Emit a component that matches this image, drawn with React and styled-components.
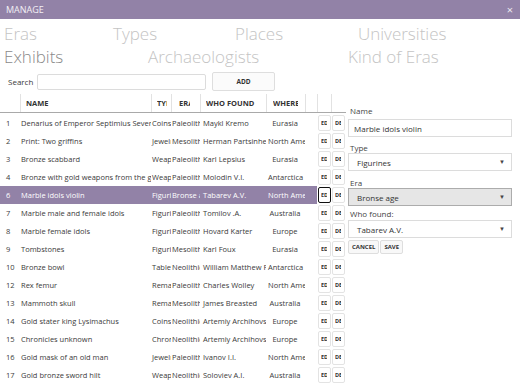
import React from 'react'
import styled, { createGlobalStyle, css } from 'styled-components'

const Colors = {
  PURPLE: '#9282a7',
  TEXT: '#3a3a3a',
  LIGHT_TAB: '#c4c4c4',
  ACTIVE_TAB: '#8a8a8a',
  BORDER: '#d9d9d9',
}

const GlobalStyle = createGlobalStyle`
  html, body {
    margin: 0;
    padding: 0;
    background: #ffffff;
  }
  body {
    width: 520px;
    height: 390px;
    overflow: hidden;
    font-family: 'Open Sans', 'Noto Sans', sans-serif;
    color: ${Colors.TEXT};
  }
`

const Window = styled.div`
  width: 520px;
  height: 390px;
  display: flex;
  flex-direction: column;
  overflow: hidden;
`

const TitleBar = styled.div`
  height: 19px;
  flex: none;
  background: ${Colors.PURPLE};
  display: flex;
  align-items: center;
  justify-content: space-between;
  padding: 0 7px 0 6px;
  color: #f2f0f5;
  font-size: 9px;
`

const Close = styled.span`
  font-size: 11px;
  line-height: 1;
  color: #ece9f0;
`

const Tabs = styled.div`
  padding: 3px 0 0 4px;
  flex: none;
`

const TabRow = styled.div`
  display: grid;
  grid-template-columns: ${p => p.$cols};
  height: 23px;
  align-items: center;
`

const Tab = styled.div`
  font-size: 17px;
  font-weight: 300;
  white-space: nowrap;
  color: ${p => (p.$active ? Colors.ACTIVE_TAB : Colors.LIGHT_TAB)};
`

const Body = styled.div`
  display: flex;
  flex: 1;
  min-height: 0;
`

const Left = styled.div`
  width: 346px;
  flex: none;
  padding-top: 4px;
`

const SearchRow = styled.div`
  display: flex;
  align-items: center;
  height: 19px;
  margin-bottom: 3px;
`

const SearchLabel = styled.span`
  font-size: 8px;
  width: 30px;
  padding-left: 8px;
`

const SearchInput = styled.div`
  width: 169px;
  height: 16px;
  border: 1px solid #dcdcdc;
  box-sizing: border-box;
  border-radius: 2px;
  margin-left: -1px;
`

const AddButton = styled.div`
  margin-left: 6px;
  width: 63px;
  height: 19px;
  box-sizing: border-box;
  border: 1px solid #dedede;
  border-radius: 2px;
  background: #fbfbfb;
  display: flex;
  align-items: center;
  justify-content: center;
  font-size: 6.5px;
  font-weight: 700;
  color: #333;
`

const COLUMNS = '20px 131px 20px 29px 66px 39px 12px 14px 14px'

const HeaderRow = styled.div`
  display: grid;
  grid-template-columns: ${COLUMNS};
  height: 18px;
  border-bottom: 1px solid #a9a9a9;
  margin-bottom: 1px;
`

const HeaderCell = styled.div`
  overflow: hidden;
  white-space: nowrap;
  line-height: 18px;
  font-size: 7.5px;
  font-weight: 700;
  color: #333;
  box-sizing: border-box;
  padding-left: ${p => p.$pad ?? 5}px;
  padding-right: ${p => p.$right ?? 3}px;
  border-left: ${p => (p.$first ? 'none' : '1px solid #e2e2e2')};
`

const HeaderText = styled.span`
  display: block;
  overflow: hidden;
`

const Row = styled.div`
  display: grid;
  grid-template-columns: ${COLUMNS};
  height: 18px;
  align-items: center;
  font-size: 7.5px;
  ${p =>
    p.$selected &&
    css`
      background: linear-gradient(to right, ${Colors.PURPLE} 317px, transparent 317px);
      color: #ffffff;
    `}
`

const Cell = styled.div`
  overflow: hidden;
  white-space: nowrap;
  box-sizing: border-box;
  padding-left: ${p => p.$pad ?? 2}px;
  padding-right: 3px;
  text-align: ${p => (p.$center ? 'center' : 'left')};
`

const Clip = styled.span`
  display: block;
  overflow: hidden;
  width: 100%;
`

const SmallButton = styled.div`
  width: 13px;
  height: 16px;
  box-sizing: border-box;
  border: ${p => (p.$focused ? '1.5px solid #111' : '1px solid #e3e3e3')};
  border-radius: 2px;
  background: #ffffff;
  font-size: 5.5px;
  font-weight: 700;
  color: #333;
  display: flex;
  align-items: center;
  padding: 0 ${p => p.$clip}px 0 2px;
  white-space: nowrap;
  margin-left: 1px;
`

const Form = styled.div`
  flex: 1;
  padding: 36px 8px 0 2px;
  display: flex;
  flex-direction: column;
`

const Label = styled.div`
  height: 12px;
  display: flex;
  align-items: center;
  font-size: 8px;
  color: #444;
  padding-left: 2px;
  margin-top: ${p => p.$gap ?? 0}px;
`

const Control = styled.div`
  height: 18px;
  flex: none;
  box-sizing: border-box;
  border: 1px solid ${p => (p.$hover ? '#acacac' : '#dcdcdc')};
  background: ${p => (p.$hover ? '#e6e6e6' : '#ffffff')};
  display: flex;
  align-items: center;
  justify-content: space-between;
  padding: 0 6px 0 ${p => (p.$select ? 8 : 5)}px;
  font-size: 8px;
  color: #333;
  margin-top: ${p => p.$gap ?? 0}px;
`

const Arrow = styled.span`
  font-size: 6px;
  color: #444;
`

const Actions = styled.div`
  display: flex;
  gap: 1px;
  margin-top: 2px;
`

const FormButton = styled.div`
  height: 14px;
  padding: 0 3px;
  box-sizing: border-box;
  border: 1px solid #dedede;
  border-radius: 2px;
  background: #f8f8f8;
  display: flex;
  align-items: center;
  font-size: 6px;
  font-weight: 700;
  color: #333;
`

const exhibits = [
  ['1', 'Denarius of Emperor Septimius Severus', 'Coins', 'Paleolithic', 'Maykl Kremo', 'Eurasia'],
  ['2', 'Print: Two griffins', 'Jewelry', 'Mesolithic', 'Herman Partsinher', 'North America'],
  ['3', 'Bronze scabbard', 'Weapons', 'Paleolithic', 'Karl Lepsius', 'Eurasia'],
  ['4', 'Bronze with gold weapons from the grave', 'Weapons', 'Paleolithic', 'Molodin V.I.', 'Antarctica'],
  ['6', 'Marble idols violin', 'Figurines', 'Bronse age', 'Tabarev A.V.', 'North America'],
  ['7', 'Marble male and female idols', 'Figurines', 'Paleolithic', 'Tomilov .A.', 'Australia'],
  ['8', 'Marble female idols', 'Figurines', 'Paleolithic', 'Hovard Karter', 'Europe'],
  ['9', 'Tombstones', 'Figurines', 'Mesolithic', 'Karl Foux', 'Eurasia'],
  ['10', 'Bronze bowl', 'Tableware', 'Neolithic', 'William Matthew Flinders Petrie', 'Antarctica'],
  ['12', 'Rex femur', 'Remains', 'Paleolithic', 'Charles Wolley', 'North America'],
  ['13', 'Mammoth skull', 'Remains', 'Mesolithic', 'James Breasted', 'Australia'],
  ['14', 'Gold stater king Lysimachus', 'Coins', 'Neolithic', 'Artemiy Archihovskiy', 'Europe'],
  ['15', 'Chronicles unknown', 'Chronicles', 'Neolithic', 'Artemiy Archihovskiy', 'Europe'],
  ['16', 'Gold mask of an old man', 'Jewelry', 'Paleolithic', 'Ivanov I.I.', 'North America'],
  ['17', 'Gold bronze sword hilt', 'Weapons', 'Neolithic', 'Soloviev A.I.', 'Australia'],
]

const SELECTED = '6'

export default function App() {
  return (
    <Window>
      <GlobalStyle />
      <TitleBar>
        <span>MANAGE</span>
        <Close>×</Close>
      </TitleBar>
      <Tabs>
        <TabRow $cols="109px 122px 123px auto">
          <Tab>Eras</Tab>
          <Tab>Types</Tab>
          <Tab>Places</Tab>
          <Tab>Universities</Tab>
        </TabRow>
        <TabRow $cols="144px 200px auto">
          <Tab $active>Exhibits</Tab>
          <Tab>Archaeologists</Tab>
          <Tab>Kind of Eras</Tab>
        </TabRow>
      </Tabs>
      <Body>
        <Left>
          <SearchRow>
            <SearchLabel>Search</SearchLabel>
            <SearchInput />
            <AddButton>ADD</AddButton>
          </SearchRow>
          <HeaderRow>
            <HeaderCell $first />
            <HeaderCell><HeaderText>NAME</HeaderText></HeaderCell>
            <HeaderCell $pad={5} $right={4}><HeaderText>TYPE</HeaderText></HeaderCell>
            <HeaderCell $pad={7} $right={10}><HeaderText>ERA</HeaderText></HeaderCell>
            <HeaderCell><HeaderText>WHO FOUND</HeaderText></HeaderCell>
            <HeaderCell $pad={6} $right={7}><HeaderText>WHERE</HeaderText></HeaderCell>
            <HeaderCell />
            <HeaderCell />
            <HeaderCell />
          </HeaderRow>
          {exhibits.map(([id, name, type, era, who, where]) => {
            const selected = id === SELECTED
            return (
              <Row key={id} $selected={selected}>
                <Cell $pad={6}>{id}</Cell>
                <Cell $pad={1}>{name}</Cell>
                <Cell $pad={1}>{type}</Cell>
                <Cell $pad={1}>{era}</Cell>
                <Cell $pad={3}>{who}</Cell>
                <Cell $center>{where}</Cell>
                <Cell />
                <SmallButton $focused={selected} $clip={3.5}>
                  <Clip>EDIT</Clip>
                </SmallButton>
                <SmallButton $clip={3}>
                  <Clip>DELETE</Clip>
                </SmallButton>
              </Row>
            )
          })}
        </Left>
        <Form>
          <Label>Name</Label>
          <Control $gap={3}>Marble idols violin</Control>
          <Label $gap={4}>Type</Label>
          <Control $select>
            Figurines<Arrow>▼</Arrow>
          </Control>
          <Label $gap={5}>Era</Label>
          <Control $select $hover>
            Bronse age<Arrow>▼</Arrow>
          </Control>
          <Label $gap={1}>Who found:</Label>
          <Control $select $gap={1}>
            Tabarev A.V.<Arrow>▼</Arrow>
          </Control>
          <Actions>
            <FormButton>CANCEL</FormButton>
            <FormButton>SAVE</FormButton>
          </Actions>
        </Form>
      </Body>
    </Window>
  )
}
